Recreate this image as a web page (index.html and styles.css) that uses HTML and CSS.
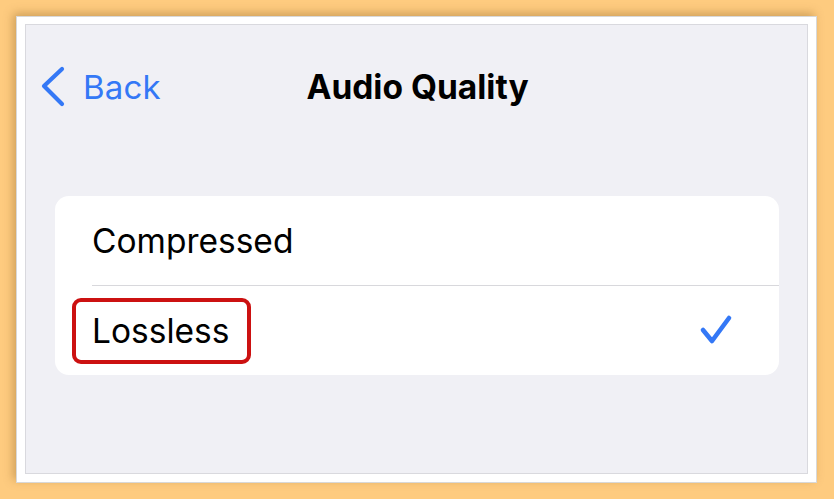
FILE: index.html
```html
<!DOCTYPE html>
<html>
<head>
<meta charset="utf-8">
<link rel="stylesheet" href="styles.css">
</head>
<body>
<div class="frame">
  <div class="screen">
    <div class="nav">
      <div class="nav-left">
        <svg class="chevron" width="26" height="42" viewBox="0 0 26 42"><path d="M22 3 L4 20 L22 38" fill="none" stroke="#3478f6" stroke-width="4.2" stroke-linecap="round" stroke-linejoin="round"/></svg>
        <span class="back">Back</span>
      </div>
      <div class="title">Audio Quality</div>
      <div class="nav-right"></div>
    </div>
    <div class="card">
      <div class="row"><span class="label">Compressed</span></div>
      <div class="sep"></div>
      <div class="row"><span class="label highlighted">Lossless</span>
        <svg class="check" width="36" height="34" viewBox="0 0 36 34"><path d="M4 16 L13 27 L30 4" fill="none" stroke="#3478f6" stroke-width="4.6" stroke-linecap="round" stroke-linejoin="round"/></svg>
      </div>
    </div>
  </div>
</div>
</body>
</html>
```
FILE: styles.css
```css
html, body {
  margin: 0;
  padding: 0;
}
body {
  background: #fecb7f;
  width: 834px;
  height: 499px;
  overflow: hidden;
  font-family: Inter, "Liberation Sans", sans-serif;
}
.frame {
  box-sizing: border-box;
  margin: 16px 0 0 16px;
  width: 801px;
  height: 467px;
  background: #ffffff;
  border: 1px solid #d8d8d8;
  padding: 7px 8px 8px 8px;
  box-shadow: -3px -3px 9px rgba(120, 80, 20, 0.35);
}
.screen {
  box-sizing: border-box;
  height: 100%;
  background: #f0f0f5;
  border: 1px solid #d9d9de;
  display: flex;
  flex-direction: column;
}
.nav {
  height: 124px;
  display: grid;
  grid-template-columns: 1fr auto 1fr;
  align-items: center;
}
.nav-left {
  display: flex;
  align-items: center;
  padding-left: 14px;
  gap: 17px;
}
.back {
  color: #3478f6;
  font-size: 33px;
  letter-spacing: 0.2px;
}
.title {
  font-size: 33.5px;
  font-weight: 700;
  color: #000;
  margin-left: 2px;
}
.card {
  margin: 47px 28px 0 29px;
  background: #ffffff;
  border-radius: 14px;
  display: flex;
  flex-direction: column;
}
.row {
  height: 89px;
  display: flex;
  align-items: center;
  justify-content: space-between;
  padding: 0 44px 0 37px;
}
.label {
  font-size: 33.5px;
  color: #000;
  position: relative;
}
.sep {
  height: 1px;
  background: #d8d8dc;
  margin-left: 37px;
}
.highlighted::after {
  content: "";
  position: absolute;
  left: -20px;
  top: -13px;
  width: 179px;
  height: 66px;
  box-sizing: border-box;
  border: 4.5px solid #cc1111;
  border-radius: 9px;
}
.check {
  display: block;
}
```
